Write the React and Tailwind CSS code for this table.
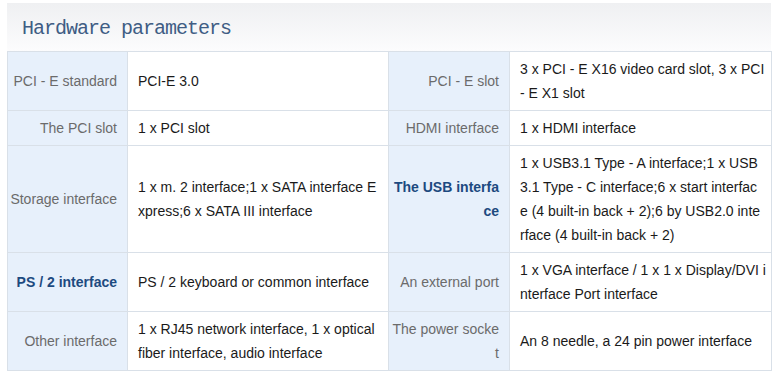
import React from 'react';

// line breaks follow the source page, which wraps mid-word
const rows = [
    [
        { label: ['PCI - E standard'], value: ['PCI-E 3.0'] },
        { label: ['PCI - E slot'], value: ['3 x PCI - E X16 video card slot, 3 x PCI', '- E X1 slot'] },
    ],
    [
        { label: ['The PCI slot'], value: ['1 x PCI slot'] },
        { label: ['HDMI interface'], value: ['1 x HDMI interface'] },
    ],
    [
        { label: ['Storage interface'], value: ['1 x m. 2 interface;1 x SATA interface E', 'xpress;6 x SATA III interface'] },
        {
            label: ['The USB interfa', 'ce'],
            strong: true,
            value: [
                '1 x USB3.1 Type - A interface;1 x USB',
                '3.1 Type - C interface;6 x start interfac',
                'e (4 built-in back + 2);6 by USB2.0 inte',
                'rface (4 built-in back + 2)',
            ],
        },
    ],
    [
        { label: ['PS / 2 interface'], strong: true, value: ['PS / 2 keyboard or common interface'] },
        { label: ['An external port'], value: ['1 x VGA interface / 1 x 1 x Display/DVI i', 'nterface Port interface'] },
    ],
    [
        { label: ['Other interface'], value: ['1 x RJ45 network interface, 1 x optical', 'fiber interface, audio interface'] },
        { label: ['The power socke', 't'], value: ['An 8 needle, a 24 pin power interface'] },
    ],
];

function Lines({ lines }) {
    return lines.map((line, i) => (
        <span key={i} className="block whitespace-nowrap">
            {line}
        </span>
    ));
}

function LabelCell({ item }) {
    return (
        <th
            className={`border border-[#d9e0e8] bg-[#e7f0fb] pl-[2px] pr-[10px] py-[5px] text-right align-middle ${
                item.strong ? 'font-bold text-[#1d4a80]' : 'font-normal text-[#6b6b6b]'
            }`}
        >
            <Lines lines={item.label} />
        </th>
    );
}

function ValueCell({ item }) {
    return (
        <td className="border border-[#d9e0e8] bg-white pl-[10px] pr-[4px] py-[5px] text-left align-middle text-[#1a1a1a]">
            <Lines lines={item.value} />
        </td>
    );
}

export default function App() {
    return (
        <div className="min-h-screen bg-white pt-[3px] pl-[7px] font-['Liberation_Sans',Arial,sans-serif]">
            <div className="w-[764px]">
                <div className="h-[48px] bg-gradient-to-b from-[#eff0f2] to-[#fcfcfd] flex items-center pl-[15px] pt-[3px]">
                    <h2 className="font-['Liberation_Mono','Courier_New',monospace] text-[20px] tracking-[-1px] text-[#405d84] font-normal">
                        Hardware parameters
                    </h2>
                </div>
                <table className="w-full table-fixed border-collapse text-[14px] leading-[24px]">
                    <colgroup>
                        <col className="w-[120px]" />
                        <col className="w-[261px]" />
                        <col className="w-[121px]" />
                        <col className="w-[262px]" />
                    </colgroup>
                    <tbody>
                        {rows.map((row, i) => (
                            <tr key={i}>
                                {row.map((item, j) => (
                                    <React.Fragment key={j}>
                                        <LabelCell item={item} />
                                        <ValueCell item={item} />
                                    </React.Fragment>
                                ))}
                            </tr>
                        ))}
                    </tbody>
                </table>
            </div>
        </div>
    );
}
